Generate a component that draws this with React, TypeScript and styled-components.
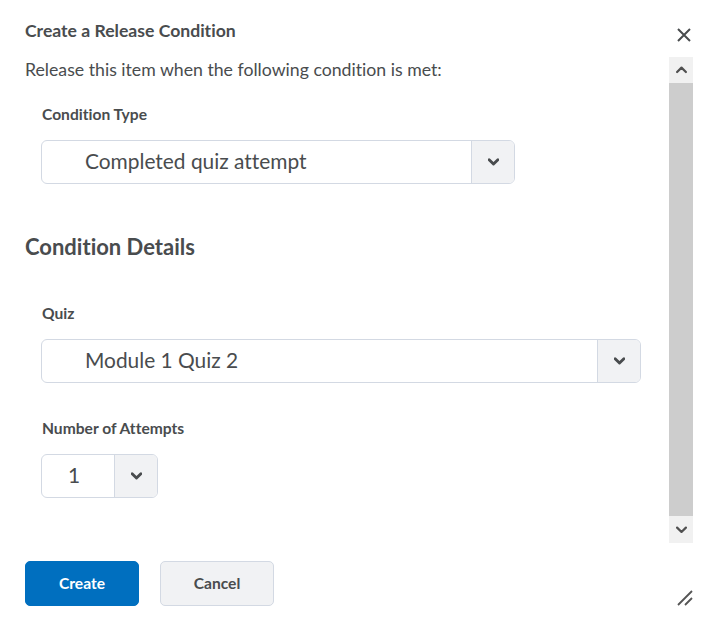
import React from "react";
import styled, { createGlobalStyle } from "styled-components";

const GlobalStyle = createGlobalStyle`
    html, body {
        margin: 0;
        padding: 0;
        background: #ffffff;
    }
    body {
        font-family: Lato, "Liberation Sans", sans-serif;
        font-variant-ligatures: none;
        color: #494c4e;
    }
`;

const Chevron = ({ up = false, size = 10, weight = 2.2 }: { up?: boolean; size?: number; weight?: number }) => (
    <svg width={size} height={size * 0.7} viewBox="0 0 10 7" fill="none">
        <path
            d={up ? "M1 5.5 L5 1.5 L9 5.5" : "M1 1.5 L5 5.5 L9 1.5"}
            stroke="#494c4e"
            strokeWidth={weight}
            strokeLinecap="round"
            strokeLinejoin="round"
        />
    </svg>
);

const Dialog = styled.div`
    width: 717px;
    height: 633px;
    display: flex;
    flex-direction: column;
    box-sizing: border-box;
`;

const Header = styled.div`
    height: 57px;
    display: flex;
    align-items: flex-start;
    justify-content: space-between;
    padding: 20px 24px 0 25px;
    box-sizing: border-box;
`;

const Title = styled.h2`
    margin: 0;
    font-size: 17.6px;
    line-height: 22px;
    font-weight: 700;
    color: #494c4e;
`;

const CloseButton = styled.button`
    width: 18px;
    height: 18px;
    margin-top: 6px;
    padding: 0;
    border: none;
    background: none;
    display: flex;
    align-items: center;
    justify-content: center;
`;

const Body = styled.div`
    height: 486px;
    display: flex;
    padding: 0 24px 0 25px;
`;

const Content = styled.div`
    flex: 1;
    overflow: hidden;
    padding-top: 1px;
`;

const Scrollbar = styled.div`
    width: 24px;
    display: flex;
    flex-direction: column;
    background: #f1f1f1;
`;

const ScrollArrow = styled.div<{ $h: number }>`
    height: ${(p) => p.$h}px;
    display: flex;
    align-items: center;
    justify-content: center;
    background: #f1f1f1;
    svg path {
        stroke: #505050;
    }
`;

const ScrollThumb = styled.div`
    flex: 1;
    background: #cdcdcd;
`;

const Intro = styled.p`
    margin: 0;
    font-size: 17.7px;
    line-height: 24px;
`;

const Field = styled.div<{ $top: number }>`
    padding-left: 16px;
    margin-top: ${(p) => p.$top}px;
`;

const Label = styled.div`
    font-size: 15.6px;
    line-height: 20px;
    font-weight: 700;
    margin-left: 1px;
    margin-bottom: 16px;
`;

const SectionHeading = styled.h3`
    margin: 48px 0 0;
    font-size: 22px;
    line-height: 30px;
    font-weight: 700;
`;

const Select = styled.div<{ $width: number }>`
    width: ${(p) => p.$width}px;
    height: 44px;
    box-sizing: border-box;
    display: flex;
    border: 1px solid #d3d9e3;
    border-radius: 6px;
    overflow: hidden;
    background: #ffffff;
`;

const SelectValue = styled.div<{ $indent: number }>`
    flex: 1;
    display: flex;
    align-items: center;
    padding-left: ${(p) => p.$indent}px;
    padding-bottom: 4px;
    font-size: 20.9px;
    color: #494c4e;
`;

const SelectArrow = styled.div`
    width: 42px;
    display: flex;
    align-items: center;
    justify-content: center;
    background: #f1f2f4;
    border-left: 1px solid #d3d9e3;
`;

const Footer = styled.div`
    flex: 1;
    display: flex;
    align-items: flex-start;
    padding: 18px 24px 0 25px;
    gap: 21px;
`;

const Button = styled.button<{ $primary?: boolean }>`
    width: 114px;
    height: 45px;
    padding: 0 0 2px;
    border-radius: 5px;
    font-family: Lato, "Liberation Sans", sans-serif;
    font-variant-ligatures: none;
    font-size: 15.6px;
    font-weight: 700;
    border: 1px solid ${(p) => (p.$primary ? "#006fbf" : "#d3d9e3")};
    background: ${(p) => (p.$primary ? "#006fbf" : "#f1f2f4")};
    color: ${(p) => (p.$primary ? "#ffffff" : "#494c4e")};
`;

const ResizeHandle = styled.div`
    margin-left: auto;
    align-self: flex-end;
    margin-bottom: 27px;
    width: 16px;
    height: 16px;
`;

const SelectBox = ({ value, width, indent }: { value: string; width: number; indent: number }) => (
    <Select $width={width}>
        <SelectValue $indent={indent}>{value}</SelectValue>
        <SelectArrow>
            <Chevron size={11} weight={2.6} />
        </SelectArrow>
    </Select>
);

export default function App() {
    return (
        <>
            <GlobalStyle />
            <Dialog>
                <Header>
                    <Title>Create a Release Condition</Title>
                    <CloseButton aria-label="Close">
                        <svg width="14" height="14" viewBox="0 0 14 14">
                            <path d="M1 1 L13 13 M13 1 L1 13" stroke="#494c4e" strokeWidth="2" />
                        </svg>
                    </CloseButton>
                </Header>
                <Body>
                    <Content>
                        <Intro>Release this item when the following condition is met:</Intro>
                        <Field $top={22}>
                            <Label>Condition Type</Label>
                            <SelectBox value="Completed quiz attempt" width={474} indent={43} />
                        </Field>
                        <SectionHeading>Condition Details</SectionHeading>
                        <Field $top={41}>
                            <Label>Quiz</Label>
                            <SelectBox value="Module 1 Quiz 2" width={600} indent={43} />
                        </Field>
                        <Field $top={35}>
                            <Label>Number of Attempts</Label>
                            <SelectBox value="1" width={117} indent={26} />
                        </Field>
                    </Content>
                    <Scrollbar>
                        <ScrollArrow $h={26}>
                            <Chevron up size={11} weight={2} />
                        </ScrollArrow>
                        <ScrollThumb />
                        <ScrollArrow $h={27}>
                            <Chevron size={11} weight={2} />
                        </ScrollArrow>
                    </Scrollbar>
                </Body>
                <Footer>
                    <Button $primary>Create</Button>
                    <Button>Cancel</Button>
                    <ResizeHandle>
                        <svg width="16" height="16" viewBox="0 0 16 16">
                            <path d="M1 15 L15 1 M8 15 L15 8" stroke="#555" strokeWidth="1.8" />
                        </svg>
                    </ResizeHandle>
                </Footer>
            </Dialog>
        </>
    );
}
